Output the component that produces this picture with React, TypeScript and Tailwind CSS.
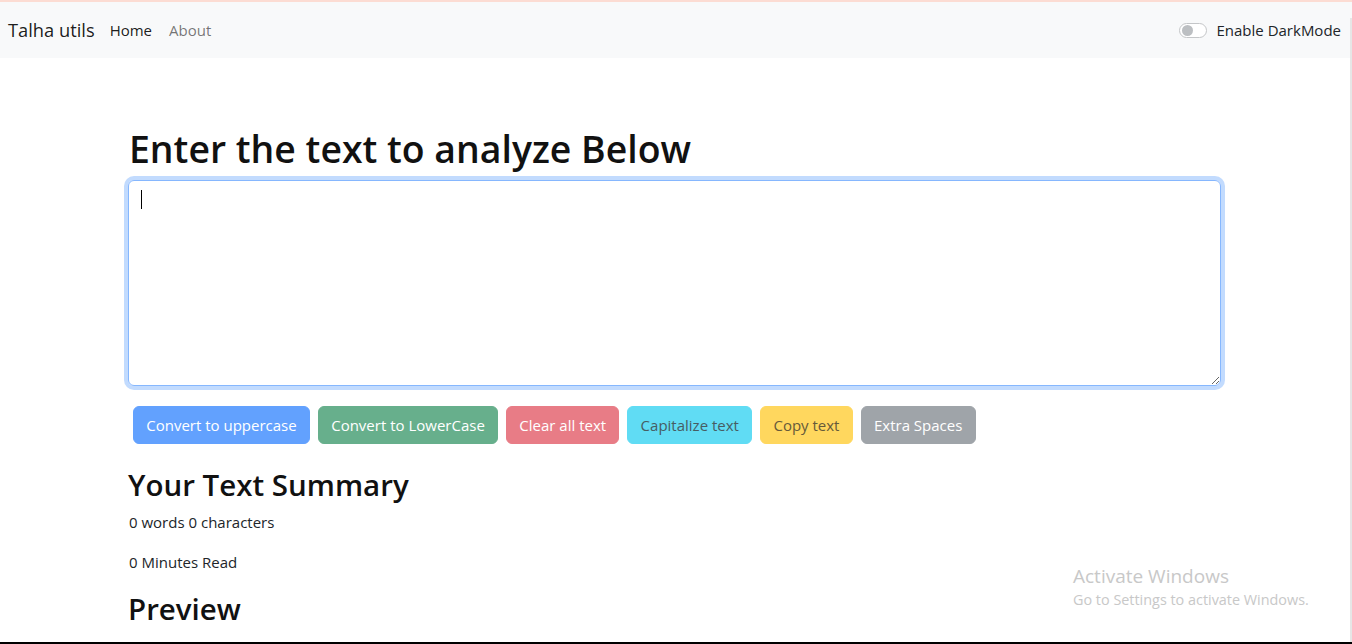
import React from "react";

const btnBase =
  "h-[38px] px-[12.25px] mx-[4px] rounded-[6px] border text-[15px] leading-[24px] whitespace-nowrap";

export default function App() {
  return (
    <div
      className="relative w-[1352px] h-[644px] overflow-hidden bg-white text-[#212529]"
      style={{ fontFamily: '"Open Sans", "Noto Sans", sans-serif' }}
    >
      {/* top thin line */}
      <div className="h-[2px] bg-[#fcdcd3]" />

      {/* navbar */}
      <nav className="h-[56px] bg-[#f8f9fa] flex items-center justify-between pl-[8px] pr-[11px]">
        <div className="flex items-center">
          <a className="text-[18.3px] leading-[30px] text-[rgba(0,0,0,0.9)]">Talha utils</a>
          <a className="ml-[15px] text-[15px] leading-[24px] text-[rgba(0,0,0,0.9)]">Home</a>
          <a className="ml-[17px] text-[15px] leading-[24px] text-[rgba(0,0,0,0.55)]">About</a>
        </div>
        <div className="flex items-center">
          <span className="relative w-[28px] h-[15px] rounded-full border border-[#c4c6c8] bg-white">
            <span className="absolute left-[2px] top-[1px] w-[11px] h-[11px] rounded-full bg-[#bcbfc2]" />
          </span>
          <span className="ml-[10px] text-[15px] leading-[24px] text-[#212529]">Enable DarkMode</span>
        </div>
      </nav>

      {/* main content */}
      <main className="ml-[128px] w-[1093px]">
        <h1 className="mt-[67px] mb-[7px] pl-[1px] text-[37.4px] leading-[48px] font-semibold text-[#111]">
          Enter the text to analyze Below
        </h1>
        <div className="relative">
          <textarea
            rows={8}
            className="block w-[1093px] h-[206px] px-[12px] py-[6px] text-[15px] border border-[#86b7fe] rounded-[6px] shadow-[0_0_0_4px_rgba(13,110,253,0.25)] outline-none resize-y"
          />
          <span className="absolute left-[13px] top-[10px] w-[1px] h-[19px] bg-black" />
        </div>

        <div className="mt-[20px] pl-[1px] flex">
          <button className={`${btnBase} bg-[#62a1fe] border-[#62a1fe] text-white`}>Convert to uppercase</button>
          <button className={`${btnBase} bg-[#67af8c] border-[#67af8c] text-white`}>Convert to LowerCase</button>
          <button className={`${btnBase} bg-[#e87c86] border-[#e87c86] text-white`}>Clear all text</button>
          <button className={`${btnBase} bg-[#60dcf4] border-[#60dcf4] text-[#475d63]`}>Capitalize text</button>
          <button className={`${btnBase} bg-[#ffd75e] border-[#ffd75e] text-[#665a3a]`}>Copy text</button>
          <button className={`${btnBase} bg-[#9fa4a9] border-[#9fa4a9] text-white`}>Extra Spaces</button>
        </div>

        <h2 className="mt-[22px] mb-[6px] text-[29.5px] leading-[38px] font-semibold text-[#111]">
          Your Text Summary
        </h2>
        <p className="text-[15px] leading-[24px] mb-[16px] pl-[1px]">0 words 0 characters</p>
        <p className="text-[15px] leading-[24px] mb-[16px] pl-[1px]">0 Minutes Read</p>
        <h2 className="text-[29.5px] leading-[38px] font-semibold text-[#111]">Preview</h2>
      </main>

      {/* Windows activation watermark */}
      <div className="absolute left-[1073px] top-[563px] text-[#c8c8c8]">
        <div className="text-[19px] leading-[27px]">Activate Windows</div>
        <div className="text-[14.4px] leading-[20px]">Go to Settings to activate Windows.</div>
      </div>

      {/* right edge line */}
      <div className="absolute right-0 top-[18px] bottom-0 w-[2px] bg-[#e6e6e6]" />
      {/* bottom black line */}
      <div className="absolute left-0 right-0 bottom-0 h-[2px] bg-black" />
    </div>
  );
}
